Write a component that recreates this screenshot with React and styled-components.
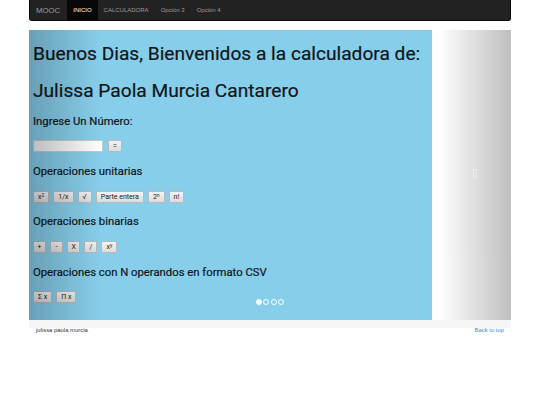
import React, { useState } from "react";
import styled, { createGlobalStyle } from "styled-components";

const GlobalStyle = createGlobalStyle`
  html, body {
    margin: 0;
    padding: 0;
    background: #fff;
    font-family: "Liberation Sans", Arial, sans-serif;
  }
`;

const navItems = ["INICIO", "CALCULADORA", "Opción 3", "Opción 4"];

const App = () => {
  const [active, setActive] = useState(0);

  return (
    <>
      <GlobalStyle />
      <Page>
        <Navbar>
          <Brand>MOOC</Brand>
          {navItems.map((item, i) => (
            <NavLink key={item} active={i === 0} onClick={() => setActive(i)}>
              {item}
            </NavLink>
          ))}
        </Navbar>

        <Carousel>
          <Slide>
            <Shot>
              <Title>Buenos Dias, Bienvenidos a la calculadora de:</Title>
              <Title second>Julissa Paola Murcia Cantarero</Title>
              <Label>Ingrese Un Número:</Label>
              <InputRow>
                <NumInput />
                <Btn>=</Btn>
              </InputRow>
              <Section>Operaciones unitarias</Section>
              <BtnRow>
                <Btn>x<sup>2</sup></Btn>
                <Btn>1/x</Btn>
                <Btn>√</Btn>
                <Btn>Parte entera</Btn>
                <Btn>2<sup>n</sup></Btn>
                <Btn>n!</Btn>
              </BtnRow>
              <Section>Operaciones binarias</Section>
              <BtnRow>
                <Btn wide>+</Btn>
                <Btn wide>-</Btn>
                <Btn wide>X</Btn>
                <Btn wide>/</Btn>
                <Btn>x<sup>y</sup></Btn>
              </BtnRow>
              <Section>Operaciones con N operandos en formato CSV</Section>
              <BtnRow last>
                <Btn>Σ x</Btn>
                <Btn>Π x</Btn>
              </BtnRow>
            </Shot>
          </Slide>
          <Control side="left" />
          <Control side="right">
            <Glyph />
          </Control>
          <Indicators>
            {[0, 1, 2, 3].map((i) => (
              <Dot key={i} active={i === active % 4} />
            ))}
          </Indicators>
        </Carousel>

        <Strip />
        <Footer>
          <span>julissa paola murcia</span>
          <TopLink href="#">Back to top</TopLink>
        </Footer>
      </Page>
    </>
  );
};

const Page = styled.div`
  width: 482px;
  margin: 0 0 0 29px;
`;

const Navbar = styled.nav`
  display: flex;
  align-items: stretch;
  height: 21px;
  background: #222;
  border: 1px solid #080808;
  border-top: none;
  border-radius: 0 0 3px 3px;
  box-sizing: border-box;
  padding-left: 6px;
`;

const Brand = styled.span`
  display: flex;
  align-items: center;
  font-size: 7.8px;
  color: #9d9d9d;
  margin-right: 7px;
`;

const NavLink = styled.a`
  display: flex;
  align-items: center;
  padding: 0 6px;
  font-size: 6px;
  color: ${(p) => (p.active ? "#ffffff" : "#9d9d9d")};
  background: ${(p) => (p.active ? "#080808" : "transparent")};
  cursor: pointer;
`;

const Carousel = styled.div`
  position: relative;
  margin-top: 9px;
  height: 290px;
  display: flex;
  overflow: hidden;
  background: #fff;
`;

const Slide = styled.div`
  width: 403px;
  height: 100%;
  background: #87ceeb;
`;

const Shot = styled.div`
  display: flex;
  flex-direction: column;
  align-items: flex-start;
  padding: 12px 0 0 4px;
  font-family: Roboto, "Liberation Sans", sans-serif;
  color: #111619;
  -webkit-text-stroke: 0.2px #111619;
`;

const Title = styled.div`
  font-size: 19.15px;
  line-height: 24px;
  margin-top: ${(p) => (p.second ? "13px" : "0")};
`;

const Label = styled.div`
  font-size: 11.3px;
  line-height: 14px;
  margin-top: 12px;
`;

const InputRow = styled.div`
  display: flex;
  align-items: center;
  gap: 5px;
  margin-top: 11px;
`;

const NumInput = styled.div`
  width: 68px;
  height: 10px;
  border: 1px solid #c9c9c9;
  background: linear-gradient(to right, #f1f1f1, #ffffff);
  border-radius: 1px;
`;

const Section = styled.div`
  font-size: 11.3px;
  line-height: 16px;
  margin-top: 11.5px;
`;

const BtnRow = styled.div`
  display: flex;
  gap: 4px;
  margin-top: ${(p) => (p.last ? "10px" : "11px")};
`;

const Btn = styled.div`
  height: 12px;
  box-sizing: border-box;
  display: flex;
  align-items: center;
  justify-content: center;
  padding: 0 ${(p) => (p.wide ? "3.5px" : "4px")};
  min-width: ${(p) => (p.wide ? "13px" : "12px")};
  font-size: 7px;
  color: #222;
  -webkit-text-stroke: 0;
  background: linear-gradient(#f3f3f3, #dcdcdc);
  border: 1px solid #b9b9b9;
  border-radius: 1px;

  sup {
    font-size: 5px;
    line-height: 0;
    margin-top: -4px;
  }
`;

const Control = styled.div`
  position: absolute;
  top: 0;
  bottom: 0;
  width: 72px;
  ${(p) => (p.side === "left" ? "left: 0;" : "right: 0;")}
  opacity: 0.5;
  background: ${(p) =>
    p.side === "left"
      ? "linear-gradient(to right, rgba(0,0,0,0.45), rgba(0,0,0,0))"
      : "linear-gradient(to right, rgba(0,0,0,0), rgba(0,0,0,0.5))"};
  display: flex;
  align-items: center;
  justify-content: center;
`;

const Glyph = styled.div`
  width: 2px;
  height: 7px;
  border: 1px solid rgba(255, 255, 255, 0.45);
  margin-top: -4px;
`;

const Indicators = styled.div`
  position: absolute;
  bottom: 15px;
  left: 0;
  right: 0;
  display: flex;
  justify-content: center;
  gap: 1.5px;
`;

const Dot = styled.span`
  width: 4px;
  height: 4px;
  border-radius: 50%;
  border: 0.7px solid #fff;
  background: ${(p) => (p.active ? "#fff" : "transparent")};
`;

const Strip = styled.div`
  height: 8px;
  background: #f5f5f5;
`;

const Footer = styled.footer`
  display: flex;
  justify-content: space-between;
  padding: 0 7px;
  font-size: 5.9px;
  line-height: 7px;
  color: #333;
  margin-top: -1px;
`;

const TopLink = styled.a`
  color: #428bca;
  text-decoration: none;
`;

export default App;
